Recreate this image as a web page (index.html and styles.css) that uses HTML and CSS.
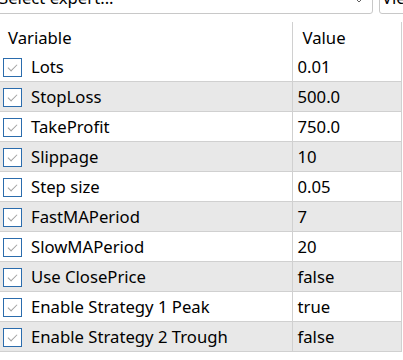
FILE: index.html
```html
<!DOCTYPE html>
<html lang="en">
  <head>
    <meta charset="UTF-8" />
    <title>Expert inputs</title>
    <link rel="stylesheet" href="styles.css">
  </head>
  <body>
    <div class="toolbar">
      <div class="combo">
        <span>Select expert...</span>
        <svg class="chevron" width="10" height="6" viewBox="0 0 10 6">
          <path d="M1 1 L5 5 L9 1" fill="none" stroke="#606060" stroke-width="1" />
        </svg>
      </div>
      <div class="combo small"><span>View</span></div>
    </div>

    <table class="inputs">
      <colgroup>
        <col class="col-var" />
        <col class="col-val" />
      </colgroup>
      <thead>
        <tr>
          <th>Variable</th>
          <th class="val">Value</th>
        </tr>
      </thead>
      <tbody>
        <tr><td><span class="check"></span>Lots</td><td class="val">0.01</td></tr>
        <tr><td><span class="check"></span>StopLoss</td><td class="val">500.0</td></tr>
        <tr><td><span class="check"></span>TakeProfit</td><td class="val">750.0</td></tr>
        <tr><td><span class="check"></span>Slippage</td><td class="val">10</td></tr>
        <tr><td><span class="check"></span>Step size</td><td class="val">0.05</td></tr>
        <tr><td><span class="check"></span>FastMAPeriod</td><td class="val">7</td></tr>
        <tr><td><span class="check"></span>SlowMAPeriod</td><td class="val">20</td></tr>
        <tr><td><span class="check"></span>Use ClosePrice</td><td class="val">false</td></tr>
        <tr><td><span class="check"></span>Enable Strategy 1 Peak</td><td class="val">true</td></tr>
        <tr><td><span class="check"></span>Enable Strategy 2 Trough</td><td class="val">false</td></tr>
      </tbody>
    </table>
  </body>
</html>
```

FILE: styles.css
```css
body {
  margin: 0;
  background: #fff;
  color: #000;
  font-family: "Noto Sans", "Open Sans", sans-serif;
  font-size: 16.7px;
  overflow: hidden;
}
.toolbar {
  display: flex;
  gap: 6px;
  height: 14px;
  align-items: flex-end;
  overflow: hidden;
}
.combo {
  flex: 0 0 383px;
  margin-left: -10px;
  height: 30px;
  box-sizing: border-box;
  border: 1px solid #c8c8c8;
  border-radius: 3px;
  display: flex;
  align-items: flex-end;
  padding: 0 8px 0 8px;
  justify-content: space-between;
  line-height: 1;
}
.combo span {
  margin-bottom: 6px;
}
.combo.small {
  flex: 0 0 60px;
  margin-left: 0;
  padding-left: 2px;
}
.chevron {
  margin-bottom: 10px;
}
.inputs {
  border-collapse: collapse;
  margin-top: 8px;
  table-layout: fixed;
  width: 402px;
}
.inputs col.col-var {
  width: 292px;
}
.inputs th {
  height: 30px;
  font-weight: normal;
  text-align: left;
  padding: 0 0 0 8px;
  border-right: 1px solid #d0d0d0;
  vertical-align: middle;
}
.inputs th.val {
  padding-left: 10px;
}
.inputs td {
  height: 29px;
  padding: 0 0 0 3px;
  border-right: 1px solid #d0d0d0;
  border-bottom: 1px solid #d0d0d0;
  white-space: nowrap;
}
.inputs tbody tr:nth-child(even) td {
  background: #e8e8e8;
}
.inputs td.val {
  padding-left: 5px;
}
.check {
  display: inline-block;
  vertical-align: middle;
  width: 17px;
  height: 17px;
  margin: -3px 9px 0 0;
  border: 1px solid #2b6cad;
  background: #fff;
  position: relative;
}
.check::after {
  content: "";
  position: absolute;
  left: 4px;
  top: 3px;
  width: 8px;
  height: 4px;
  border-left: 1px solid #a0a0a0;
  border-bottom: 1px solid #a0a0a0;
  transform: translate(0, 2px) rotate(-45deg);
}
```
